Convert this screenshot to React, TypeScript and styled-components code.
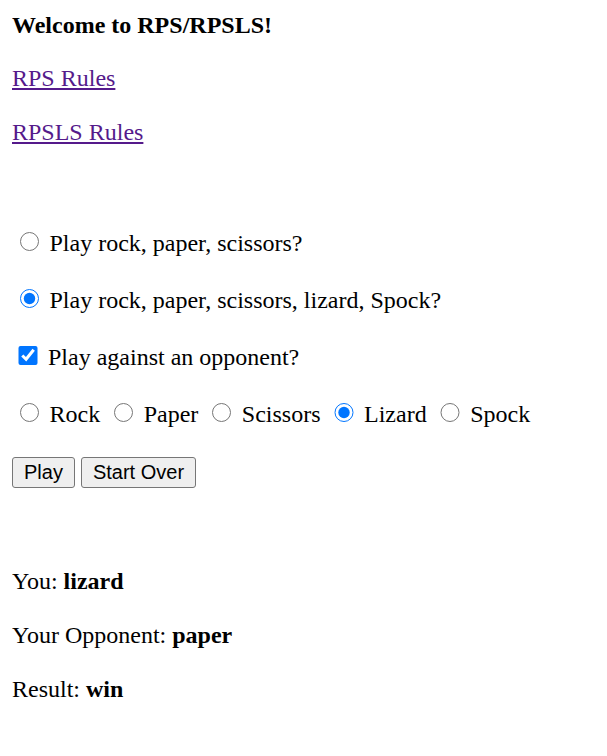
import React from "react";
import styled, { createGlobalStyle } from "styled-components";

const Global = createGlobalStyle`
  html, body { background: #fff; }
  body {
    margin: 12px;
    font-family: "Liberation Serif", "Times New Roman", serif;
    font-size: 24px;
    line-height: 30px;
    color: #000;
  }
`;

const Page = styled.main`
  display: block;
`;

const Title = styled.div`
  font-weight: bold;
  line-height: 27px;
`;

const Para = styled.p`
  margin: 24px 0;
`;

const RulesLink = styled.a`
  color: #551a8b;
  text-decoration: underline;
`;

const Form = styled.form`
  margin-top: 80px;
`;

const Row = styled.p`
  margin: 24px 0;
  line-height: 33px;
`;

const Radio = styled.input.attrs({ type: "radio" })`
  width: 19.5px;
  height: 19.5px;
  margin: 4.5px 4.5px 0 7.5px;
  accent-color: #0075ff;
`;

const Check = styled.input.attrs({ type: "checkbox" })`
  width: 19.5px;
  height: 19.5px;
  margin: 4.5px 4.5px 4.5px 6px;
  accent-color: #0075ff;
`;

const Button = styled.button`
  font-family: "Liberation Sans", Arial, sans-serif;
  font-size: 20px;
  line-height: 23px;
  padding: 3px 11px;
  border: 1.5px solid #767676;
  border-radius: 3px;
  background: #efefef;
  color: #000;
`;

const Results = styled.div`
  margin-top: 78px;
`;

const choices = ["Rock", "Paper", "Scissors", "Lizard", "Spock"];

export default function App() {
  return (
    <Page>
      <Global />
      <Title>Welcome to RPS/RPSLS!</Title>
      <Para>
        <RulesLink href="#rps">RPS Rules</RulesLink>
      </Para>
      <Para>
        <RulesLink href="#rpsls">RPSLS Rules</RulesLink>
      </Para>
      <Form onSubmit={(e) => e.preventDefault()}>
        <Row>
          <Radio name="game" id="rps" readOnly />{" "}
          <label htmlFor="rps">Play rock, paper, scissors?</label>
        </Row>
        <Row>
          <Radio name="game" id="rpsls" defaultChecked />{" "}
          <label htmlFor="rpsls">Play rock, paper, scissors, lizard, Spock?</label>
        </Row>
        <Row>
          <Check id="opp" defaultChecked />{" "}
          <label htmlFor="opp">Play against an opponent?</label>
        </Row>
        <Row>
          {choices.map((c) => (
            <React.Fragment key={c}>
              <Radio name="shot" id={c} defaultChecked={c === "Lizard"} />{" "}
              <label htmlFor={c}>{c}</label>{" "}
            </React.Fragment>
          ))}
        </Row>
        <Row>
          <Button type="submit">Play</Button>{" "}
          <Button type="button">Start Over</Button>
        </Row>
      </Form>
      <Results>
        <Para>
          You: <b>lizard</b>
        </Para>
        <Para>
          Your Opponent: <b>paper</b>
        </Para>
        <Para>
          Result: <b>win</b>
        </Para>
      </Results>
    </Page>
  );
}
